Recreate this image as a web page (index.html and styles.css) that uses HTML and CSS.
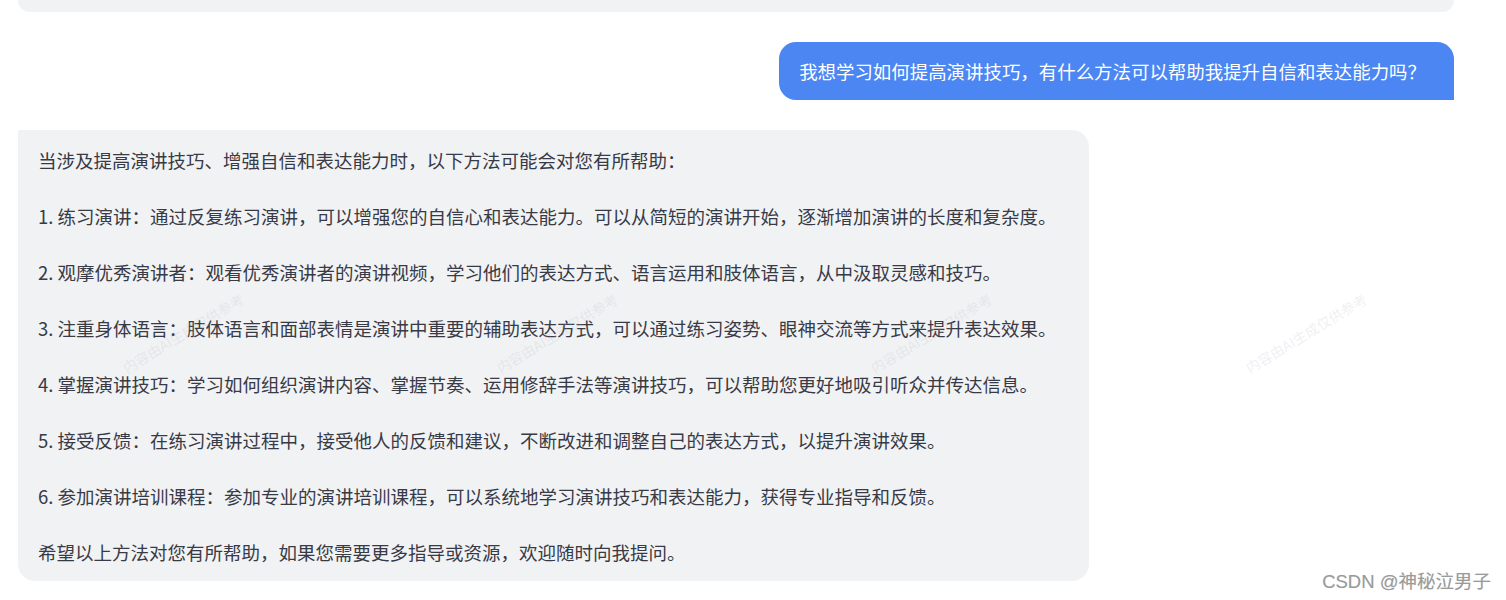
FILE: index.html
```html
<!DOCTYPE html>
<html lang="zh">
<head>
<meta charset="utf-8">
<link rel="stylesheet" href="styles.css">
</head>
<body>
<div class="chat">
  <div class="bubble-prev"></div>
  <div class="row row-user">
    <div class="bubble-user">我想学习如何提高演讲技巧，有什么方法可以帮助我提升自信和表达能力吗？</div>
  </div>
  <div class="row row-ai">
    <div class="bubble-ai">
      <p>当涉及提高演讲技巧、增强自信和表达能力时，以下方法可能会对您有所帮助：</p>
      <p>1. 练习演讲：通过反复练习演讲，可以增强您的自信心和表达能力。可以从简短的演讲开始，逐渐增加演讲的长度和复杂度。</p>
      <p>2. 观摩优秀演讲者：观看优秀演讲者的演讲视频，学习他们的表达方式、语言运用和肢体语言，从中汲取灵感和技巧。</p>
      <p>3. 注重身体语言：肢体语言和面部表情是演讲中重要的辅助表达方式，可以通过练习姿势、眼神交流等方式来提升表达效果。</p>
      <p>4. 掌握演讲技巧：学习如何组织演讲内容、掌握节奏、运用修辞手法等演讲技巧，可以帮助您更好地吸引听众并传达信息。</p>
      <p>5. 接受反馈：在练习演讲过程中，接受他人的反馈和建议，不断改进和调整自己的表达方式，以提升演讲效果。</p>
      <p>6. 参加演讲培训课程：参加专业的演讲培训课程，可以系统地学习演讲技巧和表达能力，获得专业指导和反馈。</p>
      <p>希望以上方法对您有所帮助，如果您需要更多指导或资源，欢迎随时向我提问。</p>
    </div>
  </div>
</div>
<div class="watermarks">
  <span class="wm" style="left:183px;top:333px">内容由AI生成仅供参考</span>
  <span class="wm" style="left:557px;top:333px">内容由AI生成仅供参考</span>
  <span class="wm" style="left:931px;top:333px">内容由AI生成仅供参考</span>
  <span class="wm" style="left:1306px;top:333px">内容由AI生成仅供参考</span>
</div>
<div class="csdn">CSDN @神秘泣男子</div>
</body>
</html>
```
FILE: styles.css
```css
html, body {
  margin: 0;
  padding: 0;
  background: #ffffff;
}
body {
  width: 1506px;
  height: 600px;
  overflow: hidden;
  position: relative;
  font-family: "Noto Sans CJK SC", "Noto Sans", sans-serif;
  color: #383a46;
}
.chat {
  display: flex;
  flex-direction: column;
  gap: 30px;
  padding: 0 52px 0 18px;
}
.bubble-prev {
  height: 12px;
  background: #f1f2f4;
  border-radius: 0 0 17px 17px;
}
.row {
  display: flex;
}
.row-user {
  justify-content: flex-end;
}
.row-ai {
  justify-content: flex-start;
}
.bubble-user {
  background: #4c86f2;
  color: #ffffff;
  font-size: 18.45px;
  line-height: 26px;
  padding: 16px 28px 16px 20px;
  border-radius: 17px 17px 0 17px;
}
.bubble-ai {
  background: #f1f2f4;
  font-size: 18.5px;
  line-height: 28px;
  padding: 16px 32px 15px 20px;
  border-radius: 0 17px 17px 17px;
  display: flex;
  flex-direction: column;
  gap: 28px;
}
.bubble-ai p {
  margin: 0;
  white-space: nowrap;
}
.watermarks {
  position: absolute;
  inset: 0;
  pointer-events: none;
}
.wm {
  position: absolute;
  font-size: 14px;
  line-height: 16px;
  color: rgba(180, 184, 196, 0.22);
  white-space: nowrap;
  transform: translate(-50%, -50%) rotate(-31deg);
}
.csdn {
  position: absolute;
  right: 15px;
  top: 569px;
  font-family: "Liberation Sans", "Noto Sans CJK SC", sans-serif;
  font-size: 18.5px;
  line-height: 26px;
  color: #9a9a9a;
  text-shadow: 0 0 1px #dcdcdc;
}
```
